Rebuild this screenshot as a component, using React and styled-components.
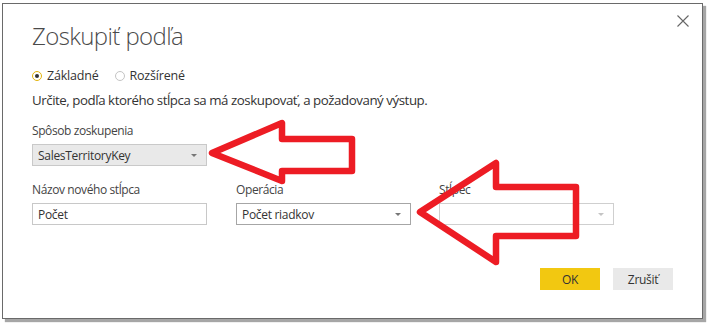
import React from "react";
import styled, { createGlobalStyle } from "styled-components";

const Global = createGlobalStyle`
  html, body { margin: 0; padding: 0; background: #fff; }
  body { font-family: "Segoe UI", "Open Sans", "Noto Sans", sans-serif; color: #333; }
  * { box-sizing: border-box; }
`;

const Page = styled.div`
  position: relative;
  width: 708px;
  height: 323px;
  padding: 3px 0 0 2px;
`;

const Dialog = styled.div`
  position: relative;
  width: 701px;
  height: 316px;
  background: #fff;
  border: 1px solid #6a6a6a;
  box-shadow: 3px 3px 1px rgba(0, 0, 0, 0.35);
  padding: 14px 29px 0 29px;
  display: flex;
  flex-direction: column;
`;

const Close = styled.button`
  position: absolute;
  top: 8px;
  right: 10px;
  width: 18px;
  height: 18px;
  border: none;
  background: transparent;
  padding: 0;
  display: flex;
  align-items: center;
  justify-content: center;
`;

const Title = styled.h1`
  margin: 0;
  font-family: "Open Sans Light", "Open Sans", sans-serif;
  font-weight: 300;
  font-size: 24px;
  line-height: 36px;
  color: #4a4a4a;
  letter-spacing: -0.6px;
`;

const RadioRow = styled.div`
  margin-top: 14px;
  display: flex;
  align-items: center;
  gap: 16px;
  height: 16px;
`;

const RadioItem = styled.label`
  display: flex;
  align-items: center;
  gap: 5px;
  font-size: 12.5px;
  line-height: 16px;
  color: #333;
  letter-spacing: -0.2px;
`;

const RadioDot = styled.span`
  width: 10px;
  height: 10px;
  border-radius: 50%;
  border: 1px solid ${(p) => (p.$on ? "#e3b30b" : "#c4c4c4")};
  display: flex;
  align-items: center;
  justify-content: center;
  &::after {
    content: "";
    width: 4px;
    height: 4px;
    border-radius: 50%;
    background: ${(p) => (p.$on ? "#333" : "transparent")};
  }
`;

const Description = styled.p`
  margin: 6px 0 0 0;
  font-size: 13.3px;
  line-height: 20px;
  color: #333;
  letter-spacing: -0.45px;
`;

const Label = styled.div`
  font-size: 12px;
  line-height: 18px;
  color: #444;
  letter-spacing: -0.4px;
  margin-bottom: 4px;
`;

const Field = styled.div`
  display: flex;
  flex-direction: column;
  width: 175px;
`;

const GroupBlock = styled.div`
  margin-top: 12px;
`;

const Grid = styled.div`
  margin-top: 15px;
  display: grid;
  grid-template-columns: 175px 174px 174px;
  column-gap: 29px;
`;

const Box = styled.div`
  height: 22px;
  width: 100%;
  border: 1px solid ${(p) => p.$border || "#c6c6c6"};
  background: ${(p) => p.$bg || "#fff"};
  display: flex;
  align-items: center;
  justify-content: space-between;
  padding: 0 9px 0 5px;
  font-size: 12px;
  color: #333;
  letter-spacing: -0.3px;
`;

const Caret = styled.span`
  width: 0;
  height: 0;
  border-left: 3px solid transparent;
  border-right: 3px solid transparent;
  border-top: 3px solid ${(p) => p.$color || "#777"};
`;

const Footer = styled.div`
  margin-top: 43px;
  display: flex;
  justify-content: flex-end;
  gap: 13px;
`;

const Button = styled.button`
  width: 60px;
  height: 22px;
  border: none;
  background: ${(p) => (p.$primary ? "#f2c811" : "#e9e9e9")};
  color: #333;
  font-family: "Segoe UI", "Open Sans", sans-serif;
  font-size: 12px;
  letter-spacing: -0.3px;
  padding: 0;
`;

const Overlay = styled.svg`
  position: absolute;
  left: 0;
  top: 0;
  pointer-events: none;
`;

export default function App() {
  return (
    <>
      <Global />
      <Page>
        <Dialog>
          <Close aria-label="close">
            <svg width="12" height="12" viewBox="0 0 12 12">
              <path d="M0.5 0.5 L11.5 11.5 M11.5 0.5 L0.5 11.5" stroke="#666" strokeWidth="1.1" />
            </svg>
          </Close>
          <Title>Zoskupiť podľa</Title>
          <RadioRow>
            <RadioItem>
              <RadioDot $on />
              Základné
            </RadioItem>
            <RadioItem>
              <RadioDot />
              Rozšírené
            </RadioItem>
          </RadioRow>
          <Description>
            Určite, podľa ktorého stĺpca sa má zoskupovať, a požadovaný výstup.
          </Description>
          <GroupBlock>
            <Field>
              <Label>Spôsob zoskupenia</Label>
              <Box $bg="#e9e9e9" $border="#c9c9c9">
                SalesTerritoryKey
                <Caret />
              </Box>
            </Field>
          </GroupBlock>
          <Grid>
            <Field>
              <Label>Názov nového stĺpca</Label>
              <Box $border="#c8c8c8">Počet</Box>
            </Field>
            <Field>
              <Label>Operácia</Label>
              <Box $border="#a6a6a6">
                Počet riadkov
                <Caret />
              </Box>
            </Field>
            <Field>
              <Label>Stĺpec</Label>
              <Box $border="#cfcfcf">
                <span />
                <Caret $color="#c4c4c4" />
              </Box>
            </Field>
          </Grid>
          <Footer>
            <Button $primary>OK</Button>
            <Button>Zrušiť</Button>
          </Footer>
        </Dialog>
        <Overlay width="708" height="323" viewBox="0 0 708 323">
          <g fill="none" stroke="#ed1c24" strokeWidth="6.5" strokeLinejoin="round">
            <polygon points="212,153 282,123 282,139 352,139 352,171 282,171 282,181" />
            <polygon points="420,212 496,163 496,187 576,187 576,236 496,236 496,262" />
          </g>
        </Overlay>
      </Page>
    </>
  );
}
